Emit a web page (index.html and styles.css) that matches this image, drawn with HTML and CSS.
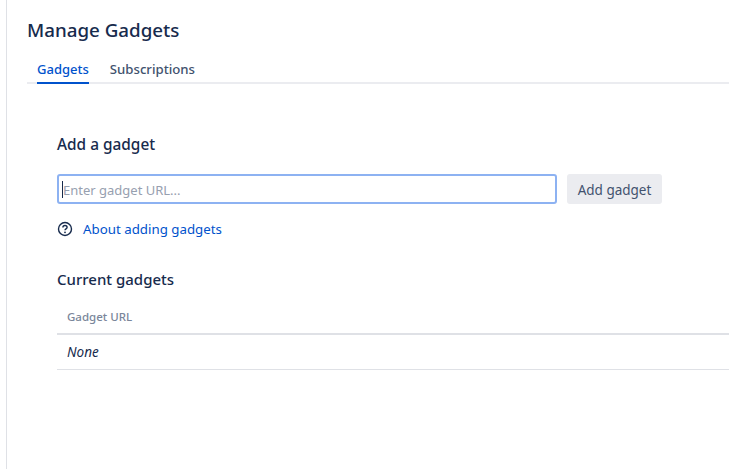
FILE: index.html
```html
<!DOCTYPE html>
<html lang="en">
<head>
  <meta charset="UTF-8" />
  <title>Manage Gadgets</title>
  <link rel="stylesheet" href="styles.css">
</head>
<body>
  <div class="page">
    <h1>Manage Gadgets</h1>

    <!-- Tabs -->
    <div class="tabs">
      <a href="#" class="tab active">Gadgets</a>
      <a href="#" class="tab">Subscriptions</a>
    </div>

    <div class="content">
      <h2 class="add-title">Add a gadget</h2>
      <div class="add-row">
        <div class="url-input">
          <span class="caret"></span>
          <span class="placeholder">Enter gadget URL...</span>
        </div>
        <button class="add-btn">Add gadget</button>
      </div>

      <div class="help-row">
        <svg class="help-icon" width="16" height="16" viewBox="0 0 16 16" fill="none" stroke="#172b4d">
          <circle cx="8" cy="8" r="6.5" stroke-width="1.4"/>
          <path d="M5.9 6.4c0-1.2 1-1.9 2.1-1.9s2.1.7 2.1 1.8c0 1.6-2.1 1.6-2.1 3" stroke-width="1.4"/>
          <circle cx="8" cy="11.3" r=".9" fill="#172b4d" stroke="none"/>
        </svg>
        <a href="#" class="help-link">About adding gadgets</a>
      </div>

      <h2 class="current-title">Current gadgets</h2>
      <table class="gadgets">
        <thead>
          <tr><th>Gadget URL</th></tr>
        </thead>
        <tbody>
          <tr><td>None</td></tr>
        </tbody>
      </table>
    </div>
  </div>
</body>
</html>
```

FILE: styles.css
```css
* {
  margin: 0;
  padding: 0;
  box-sizing: border-box;
}

html, body {
  height: 100%;
  overflow: hidden;
}

body {
  font-family: "Noto Sans", "Open Sans", sans-serif;
  background: #ffffff;
  color: #172b4d;
  font-size: 13px;
}

.page {
  margin-left: 6px;
  height: 100%;
  border-left: 1px solid #dfe1e6;
  padding-top: 17px;
}

h1 {
  font-size: 18.75px;
  font-weight: 500;
  line-height: 26px;
  margin-left: 20px;
}

/* Tabs */
.tabs {
  display: flex;
  gap: 21px;
  margin-top: 11px;
  margin-left: 20px;
  padding-left: 10px;
  height: 30px;
  border-bottom: 2px solid #ebecf0;
}

.tab {
  font-weight: 500;
  font-size: 13.2px;
  line-height: 31px;
  height: 30px;
  text-decoration: none;
  color: #42526e;
}

.tab.active {
  font-size: 13px;
  color: #0052cc;
  border-bottom: 2px solid #0052cc;
}

.content {
  margin-left: 50px;
  padding-top: 50px;
}

h2 {
  font-size: 15px;
  font-weight: 500;
  line-height: 22px;
}

.add-title {
  font-size: 15.4px;
}

.add-row {
  display: flex;
  gap: 10px;
  margin-top: 18px;
}

.url-input {
  width: 500px;
  height: 30px;
  border: 2px solid #8db2f2;
  border-radius: 3px;
  display: flex;
  align-items: center;
  padding-left: 3px;
}

.caret {
  width: 1px;
  height: 17px;
  background: #172b4d;
}

.placeholder {
  color: #97a0af;
  font-size: 13px;
  padding-top: 1px;
}

.add-btn {
  width: 95px;
  height: 30px;
  background: #ebecf0;
  border: none;
  border-radius: 3px;
  color: #42526e;
  font-family: inherit;
  font-size: 13.5px;
  padding-top: 2px;
}

.help-row {
  display: flex;
  align-items: center;
  gap: 10px;
  margin-top: 15px;
  height: 20px;
}

.help-link {
  color: #0052cc;
  text-decoration: none;
  font-size: 13.3px;
}

.current-title {
  margin-top: 29px;
}

.gadgets {
  width: 100%;
  border-collapse: collapse;
  margin-top: 10px;
}

.gadgets th {
  text-align: left;
  font-size: 11.5px;
  font-weight: 500;
  color: #7a869a;
  padding: 0 10px;
  height: 34px;
  border-bottom: 2px solid #dfe1e6;
}

.gadgets td {
  font-style: italic;
  font-size: 13.5px;
  padding: 0 10px;
  height: 35px;
  border-bottom: 1px solid #dfe1e6;
}
```
